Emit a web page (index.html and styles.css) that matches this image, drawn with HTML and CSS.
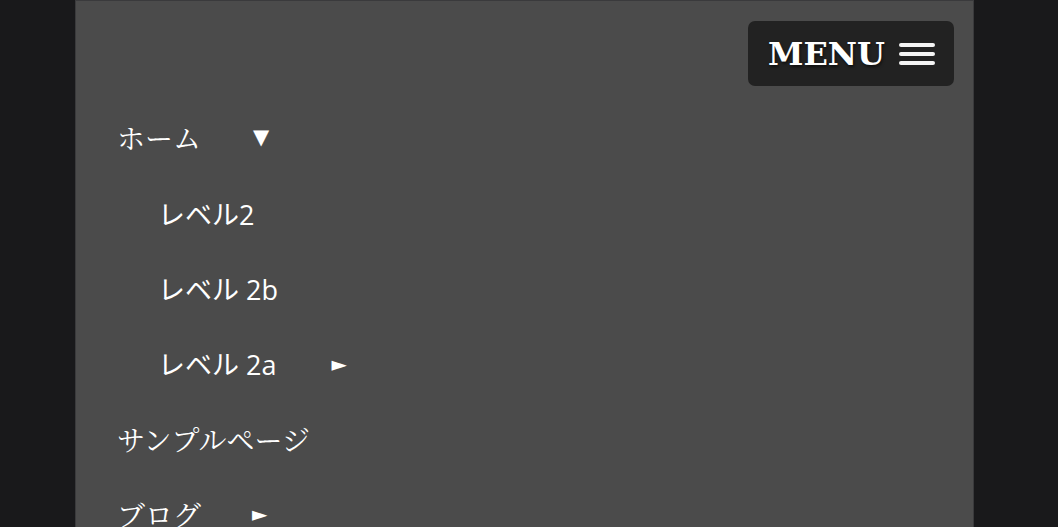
FILE: index.html
```html
<!DOCTYPE html>
<html lang="ja">
<head>
<meta charset="utf-8">
<link rel="stylesheet" href="styles.css">
</head>
<body>
<div class="page">
  <header class="bar">
    <button class="menu-btn">MENU
      <svg class="burger" width="36" height="26" viewBox="0 0 36 26">
        <rect x="0" y="2" width="36" height="4" rx="2" fill="#f4f4f4"/>
        <rect x="0" y="11" width="36" height="4" rx="2" fill="#f4f4f4"/>
        <rect x="0" y="20" width="36" height="4" rx="2" fill="#f4f4f4"/>
      </svg>
    </button>
  </header>
  <ul class="nav">
    <li class="item top first"><span class="label">ホーム</span><span class="down">▼</span></li>
    <li class="item sub"><span class="label">レベル2</span></li>
    <li class="item sub"><span class="label">レベル 2b</span></li>
    <li class="item sub"><span class="label">レベル 2a</span><span class="right">►</span></li>
    <li class="item top"><span class="label">サンプルページ</span></li>
    <li class="item top"><span class="label">ブログ</span><span class="right">►</span></li>
  </ul>
</div>
</body>
</html>
```
FILE: styles.css
```css
html, body {
  margin: 0;
  padding: 0;
  background: #19191b;
  height: 100%;
  overflow: hidden;
}
.page {
  margin-left: 75px;
  width: 899px;
  min-height: 600px;
  background: #4b4b4b;
  border: 1px solid #3a3a3c;
  border-bottom: none;
  box-sizing: border-box;
  padding-top: 20px;
}
.bar {
  display: flex;
  justify-content: flex-end;
  padding-right: 19px;
}
.menu-btn {
  display: flex;
  align-items: center;
  gap: 14px;
  height: 65px;
  padding: 0 19px 0 20px;
  background: #222222;
  border: none;
  border-radius: 7px;
  color: #ffffff;
  font-family: "DejaVu Serif", "Liberation Serif", serif;
  font-weight: bold;
  font-size: 32px;
  text-shadow: 1px 2px 3px rgba(0,0,0,0.6);
}
.burger { display: block; }
.nav {
  list-style: none;
  margin: 12px 0 0 0;
  padding: 0 0 0 41px;
}
.item {
  height: 75px;
  display: flex;
  align-items: center;
  color: #ffffff;
  font-size: 26px;
}
.first {
  height: 78px;
}
.top {
  font-family: "Noto Serif CJK JP", "Liberation Serif", serif;
  font-size: 28px;
}
.sub {
  padding-left: 41px;
  font-family: "Open Sans", "Noto Sans CJK JP", sans-serif;
  font-size: 27px;
}
.down {
  margin-left: 52px;
  font-size: 21px;
  font-family: "DejaVu Sans", sans-serif;
}
.right {
  margin-left: 51px;
  font-size: 20px;
  font-family: "DejaVu Sans", sans-serif;
}
.sub .right {
  margin-left: 55px;
}
```
